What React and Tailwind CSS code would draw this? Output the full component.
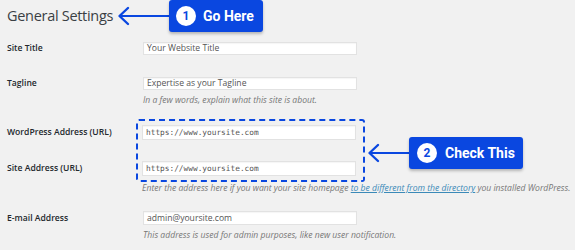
import React from "react";

const Arrow = ({ width }) => (
  <svg width={width} height="20" viewBox={`0 0 ${width} 20`} className="shrink-0">
    <path d={`M2 10 H${width}`} stroke="#0a47e0" strokeWidth="2.2" fill="none" />
    <path d="M11 2 L2.5 10 L11 18" stroke="#0a47e0" strokeWidth="2.4" fill="none" strokeLinecap="round" strokeLinejoin="round" />
  </svg>
);

const Badge = ({ num, text, className }) => (
  <div
    className={`flex items-center h-[32px] bg-[#0a47e0] rounded-[3px] shadow-[0_2px_3px_rgba(0,0,0,0.25)] text-white font-bold ${className}`}
    style={{ fontFamily: "Roboto, 'Liberation Sans', sans-serif" }}
  >
    <span className="flex items-center justify-center w-[20px] h-[20px] rounded-full bg-white text-[#0a47e0] text-[12px] leading-none">
      {num}
    </span>
    <span className="text-[14px] leading-none">{text}</span>
  </div>
);

const Field = ({ value, mono, h = "h-[13px]" }) => (
  <div
    className={`w-[214px] ${h} bg-white border border-[#e2e2e2] shadow-[inset_0_1px_1px_rgba(0,0,0,0.04)] flex items-center px-[3px] text-[#555] ${mono ? "text-[7.8px]" : "text-[8.6px]"}`}
    style={mono ? { fontFamily: "'DejaVu Sans Mono', 'Liberation Mono', monospace" } : undefined}
  >
    {value}
  </div>
);

const Label = ({ children }) => (
  <div className="w-[136px] pl-[7px] text-[8.6px] font-semibold text-[#23282d]">{children}</div>
);

const Desc = ({ children, className = "" }) => (
  <p className={`text-[8.6px] leading-[12px] italic text-[#777] whitespace-nowrap ${className}`}>{children}</p>
);

export default function App() {
  return (
    <div
      className="w-[575px] h-[250px] bg-[#f1f1f1] overflow-hidden"
      style={{ fontFamily: "'Open Sans', 'Noto Sans', sans-serif" }}
    >
      {/* heading + callout 1 */}
      <div className="flex items-center h-[32px] pl-[7px]">
        <h1 className="w-[106px] text-[14.5px] tracking-[-0.3px] text-[#3a3f44] leading-none whitespace-nowrap">
          General Settings
        </h1>
        <div className="ml-[4px]">
          <Arrow width={52} />
        </div>
        <Badge num="1" text="Go Here" className="w-[94px] pl-[7px] gap-[7px]" />
      </div>

      {/* Site Title */}
      <div className="flex items-center mt-[10px]">
        <Label>Site Title</Label>
        <div className="pl-[7px]">
          <Field value="Your Website Title" />
        </div>
      </div>

      {/* Tagline */}
      <div className="flex mt-[22px]">
        <Label>
          <div className="h-[13px] flex items-center">Tagline</div>
        </Label>
        <div className="pl-[7px]">
          <Field value="Expertise as your Tagline" />
          <Desc className="mt-[4px]">In a few words, explain what this site is about.</Desc>
        </div>
      </div>

      {/* URL group */}
      <div className="flex mt-[13px]">
        <div className="w-[136px] pl-[7px] pt-[6px] text-[8.6px] font-semibold text-[#23282d]">
          <div className="h-[15px] flex items-center">WordPress Address (URL)</div>
          <div className="h-[15px] flex items-center mt-[21px]">Site Address (URL)</div>
        </div>
        <div>
          <div className="flex">
            <div className="w-[229px] border-2 border-dashed border-[#0a47e0] rounded-[3px] pt-[4px] pb-[4px] pl-[4px]">
              <Field value="https://www.yoursite.com" mono h="h-[15px]" />
              <div className="mt-[21px]">
                <Field value="https://www.yoursite.com" mono h="h-[15px]" />
              </div>
            </div>
            <div className="flex items-center mt-[18px] h-[32px]">
              <div className="ml-[2px]">
                <Arrow width={42} />
              </div>
              <Badge num="2" text="Check This" className="w-[114px] pl-[8px] gap-[8px]" />
            </div>
          </div>
          <Desc className="pl-[6px]">
            Enter the address here if you want your site homepage{" "}
            <span className="text-[#3b8ab8] underline">to be different from the directory</span> you installed
            WordPress.
          </Desc>
        </div>
      </div>

      {/* Email */}
      <div className="flex mt-[17px]">
        <Label>
          <div className="h-[14px] flex items-center">E-mail Address</div>
        </Label>
        <div className="pl-[7px]">
          <Field value="admin@yoursite.com" h="h-[14px]" />
          <Desc className="mt-[4px]">This address is used for admin purposes, like new user notification.</Desc>
        </div>
      </div>
    </div>
  );
}
